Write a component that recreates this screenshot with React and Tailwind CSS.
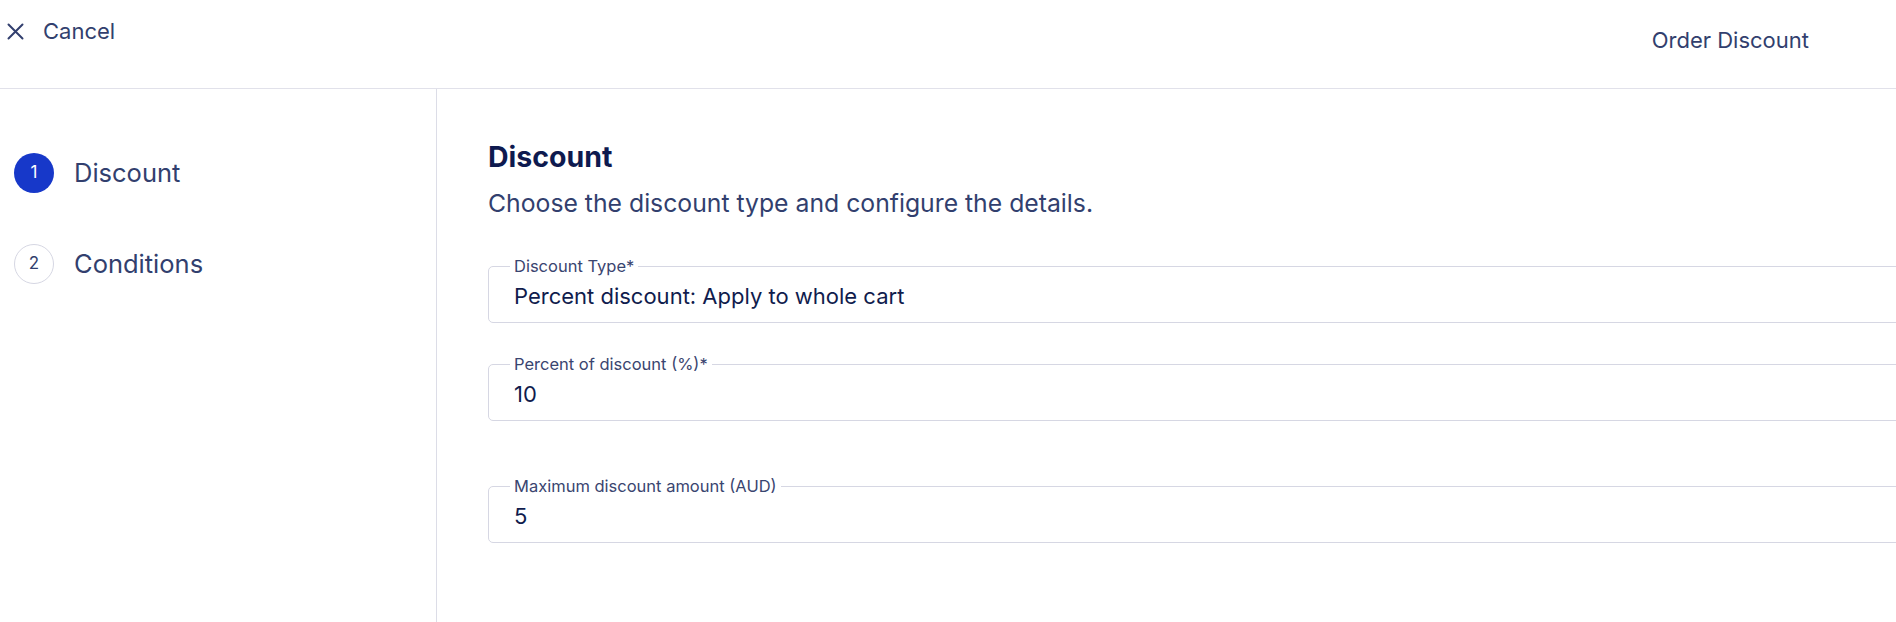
import React from "react";

const steps = [
  { num: 1, label: "Discount", active: true },
  { num: 2, label: "Conditions", active: false },
];

const fields = [
  { label: "Discount Type*", value: "Percent discount: Apply to whole cart", gap: "mt-[38px]" },
  { label: "Percent of discount (%)*", value: "10", gap: "mt-[31px]" },
  { label: "Maximum discount amount (AUD)", value: "5", gap: "mt-[55px]" },
];

const Field = ({ label, value, gap }) => (
  <fieldset className={`${gap} w-[1460px] rounded-[5px] border border-[#d6d7e3] pl-[21px] pb-[12px]`}>
    <legend className="px-[4px] text-[16.5px] leading-[20px] text-[#3a4570]">{label}</legend>
    <div className="pl-[4px] pt-[6px] text-[22px] leading-[28px] text-[#101c4d]">{value}</div>
  </fieldset>
);

const App = () => {
  return (
    <div
      className="flex h-screen flex-col overflow-hidden bg-white"
      style={{ fontFamily: "Inter, 'Noto Sans', sans-serif" }}
    >
      {/* header */}
      <div className="flex h-[89px] shrink-0 items-start justify-between border-b border-[#e1e1ea]">
        <button className="mt-[17px] ml-[7px] flex items-center gap-[19px] text-[22px] leading-[28px] text-[#323f6e]">
          <svg width="17" height="17" viewBox="0 0 17 17" fill="none" stroke="#323f6e" strokeWidth="2" strokeLinecap="round">
            <path d="M1.5 1.5l14 14M15.5 1.5l-14 14" />
          </svg>
          Cancel
        </button>
        <div className="mt-[26px] mr-[87px] text-[22px] leading-[28px] text-[#323f6e]">Order Discount</div>
      </div>

      <div className="flex flex-1">
        {/* steps */}
        <div className="w-[437px] shrink-0 border-r border-[#dcdde7] pt-[64px] pl-[14px]">
          <div className="flex flex-col gap-[51px]">
            {steps.map((step) => (
              <div key={step.num} className="flex items-center gap-[20px]">
                <div
                  className={`flex h-[40px] w-[40px] items-center justify-center rounded-full text-[17px] ${
                    step.active
                      ? "bg-[#1738c9] text-white"
                      : "border border-[#d6d7e3] bg-white text-[#323f6e]"
                  }`}
                >
                  {step.num}
                </div>
                <span className="text-[25.5px] leading-[32px] text-[#323f6e]">{step.label}</span>
              </div>
            ))}
          </div>
        </div>

        {/* form */}
        <div className="flex-1 overflow-hidden pl-[51px] pt-[52px]">
          <h2 className="text-[28.5px] leading-[32px] font-bold text-[#0e1a4f]">Discount</h2>
          <p className="mt-[15px] text-[24.75px] leading-[30px] text-[#323f6e]">
            Choose the discount type and configure the details.
          </p>
          {fields.map((f) => (
            <Field key={f.label} {...f} />
          ))}
        </div>
      </div>
    </div>
  );
};

export default App;
